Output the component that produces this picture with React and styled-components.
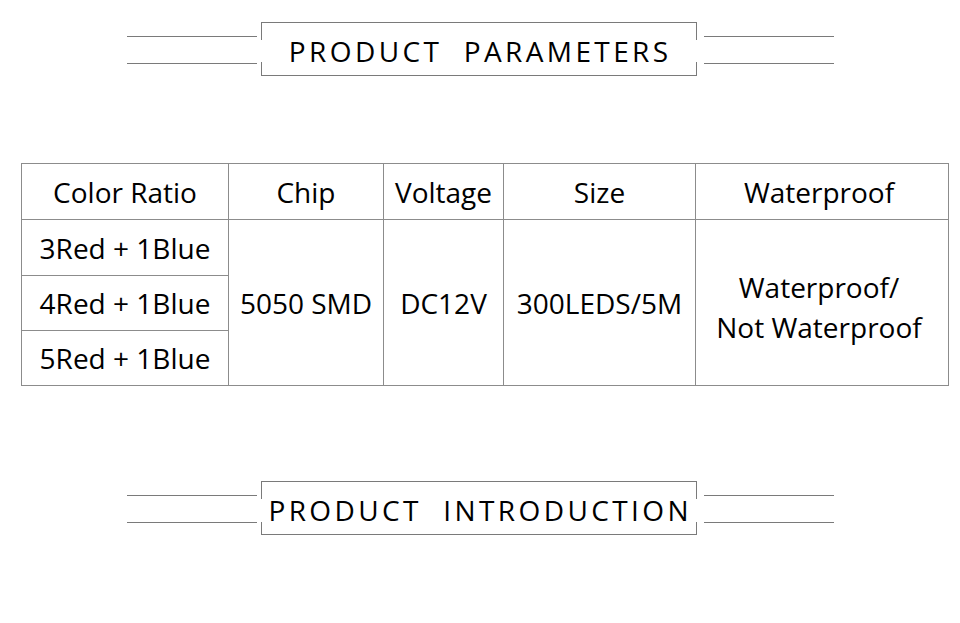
import React from "react";
import styled, { createGlobalStyle } from "styled-components";

const Global = createGlobalStyle`
  html, body { margin: 0; padding: 0; background: #fff; }
  body { font-family: "Open Sans", "Liberation Sans", sans-serif; color: #111; }
`;

const Page = styled.div`
  width: 960px;
  height: 623px;
  padding-top: 22px;
  box-sizing: border-box;
  display: flex;
  flex-direction: column;
  align-items: stretch;
  overflow: hidden;
`;

const TitleRow = styled.div`
  display: flex;
  justify-content: center;
  align-items: stretch;
  height: 54px;
  margin-top: ${(p) => p.$mt || 0}px;
`;

const Lines = styled.div`
  width: 130px;
  display: flex;
  flex-direction: column;
  justify-content: flex-start;
  padding-top: ${(p) => p.$pt}px;
  gap: ${(p) => p.$gap}px;
  margin: ${(p) => (p.$side === "left" ? "0 4px 0 0" : "0 0 0 7px")};
`;

const Line = styled.div`
  height: 1px;
  background: #7a7a7a;
`;

const TitleBox = styled.div`
  width: 436px;
  box-sizing: border-box;
  border-top: 1px solid #7a7a7a;
  border-bottom: 1px solid #7a7a7a;
  background:
    linear-gradient(#7a7a7a, #7a7a7a) left top / 1px ${(p) => p.$top}px no-repeat,
    linear-gradient(#7a7a7a, #7a7a7a) left bottom / 1px ${(p) => p.$bottom}px no-repeat,
    linear-gradient(#7a7a7a, #7a7a7a) right top / 1px ${(p) => p.$top}px no-repeat,
    linear-gradient(#7a7a7a, #7a7a7a) right bottom / 1px ${(p) => p.$bottom}px no-repeat,
    #fff;
  display: flex;
  align-items: center;
  justify-content: center;
  padding-top: 3px;
  padding-left: ${(p) => p.$ls}px;
  font-family: "Open Sans", sans-serif;
  font-size: ${(p) => p.$fs}px;
  letter-spacing: ${(p) => p.$ls}px;
  color: #000;
  white-space: pre;
`;

const TableWrap = styled.div`
  margin-top: 87px;
  padding-left: 21px;
`;

const Table = styled.table`
  border-collapse: collapse;
  table-layout: fixed;
  width: 927px;
  font-family: "Open Sans", sans-serif;
  font-size: 28px;
  color: #000;
`;

const Cell = styled.td`
  border: 1px solid #8c8c8c;
  text-align: center;
  vertical-align: middle;
  padding: ${(p) => (p.$shift ? `${p.$shift}px 6px 0 0` : "0")};
  height: ${(p) => p.$h || 54}px;
  line-height: 40px;
  box-sizing: border-box;
  white-space: nowrap;
`;

const HeadCell = styled(Cell).attrs({ as: "th" })`
  font-weight: 400;
`;

function Title({ text, fs, ls, mt, lineTop, lineGap, segTop, segBottom }) {
  return (
    <TitleRow $mt={mt}>
      <Lines $side="left" $pt={lineTop} $gap={lineGap}>
        <Line />
        <Line />
      </Lines>
      <TitleBox $fs={fs} $ls={ls} $top={segTop} $bottom={segBottom}>
        {text}
      </TitleBox>
      <Lines $side="right" $pt={lineTop} $gap={lineGap}>
        <Line />
        <Line />
      </Lines>
    </TitleRow>
  );
}

const cols = [207, 155, 120, 192, 253];

export default function App() {
  return (
    <>
      <Global />
      <Page>
        <Title
          text="PRODUCT  PARAMETERS"
          fs={28}
          ls={3.4}
          lineTop={14}
          lineGap={26}
          segTop={17}
          segBottom={13}
        />
        <TableWrap>
          <Table>
            <colgroup>
              {cols.map((w, i) => (
                <col key={i} style={{ width: w }} />
              ))}
            </colgroup>
            <thead>
              <tr>
                <HeadCell $h={56}>Color Ratio</HeadCell>
                <HeadCell $h={56}>Chip</HeadCell>
                <HeadCell $h={56}>Voltage</HeadCell>
                <HeadCell $h={56}>Size</HeadCell>
                <HeadCell $h={56} $shift={1}>Waterproof</HeadCell>
              </tr>
            </thead>
            <tbody>
              <tr>
                <Cell $h={56}>3Red + 1Blue</Cell>
                <Cell rowSpan={3}>5050 SMD</Cell>
                <Cell rowSpan={3}>DC12V</Cell>
                <Cell rowSpan={3}>300LEDS/5M</Cell>
                <Cell rowSpan={3} $shift={8}>
                  Waterproof/
                  <br />
                  Not Waterproof
                </Cell>
              </tr>
              <tr>
                <Cell $h={55}>4Red + 1Blue</Cell>
              </tr>
              <tr>
                <Cell $h={55}>5Red + 1Blue</Cell>
              </tr>
            </tbody>
          </Table>
        </TableWrap>
        <Title
          text="PRODUCT  INTRODUCTION"
          fs={28}
          ls={3.4}
          mt={95}
          lineTop={14}
          lineGap={26}
          segTop={17}
          segBottom={12}
        />
      </Page>
    </>
  );
}
